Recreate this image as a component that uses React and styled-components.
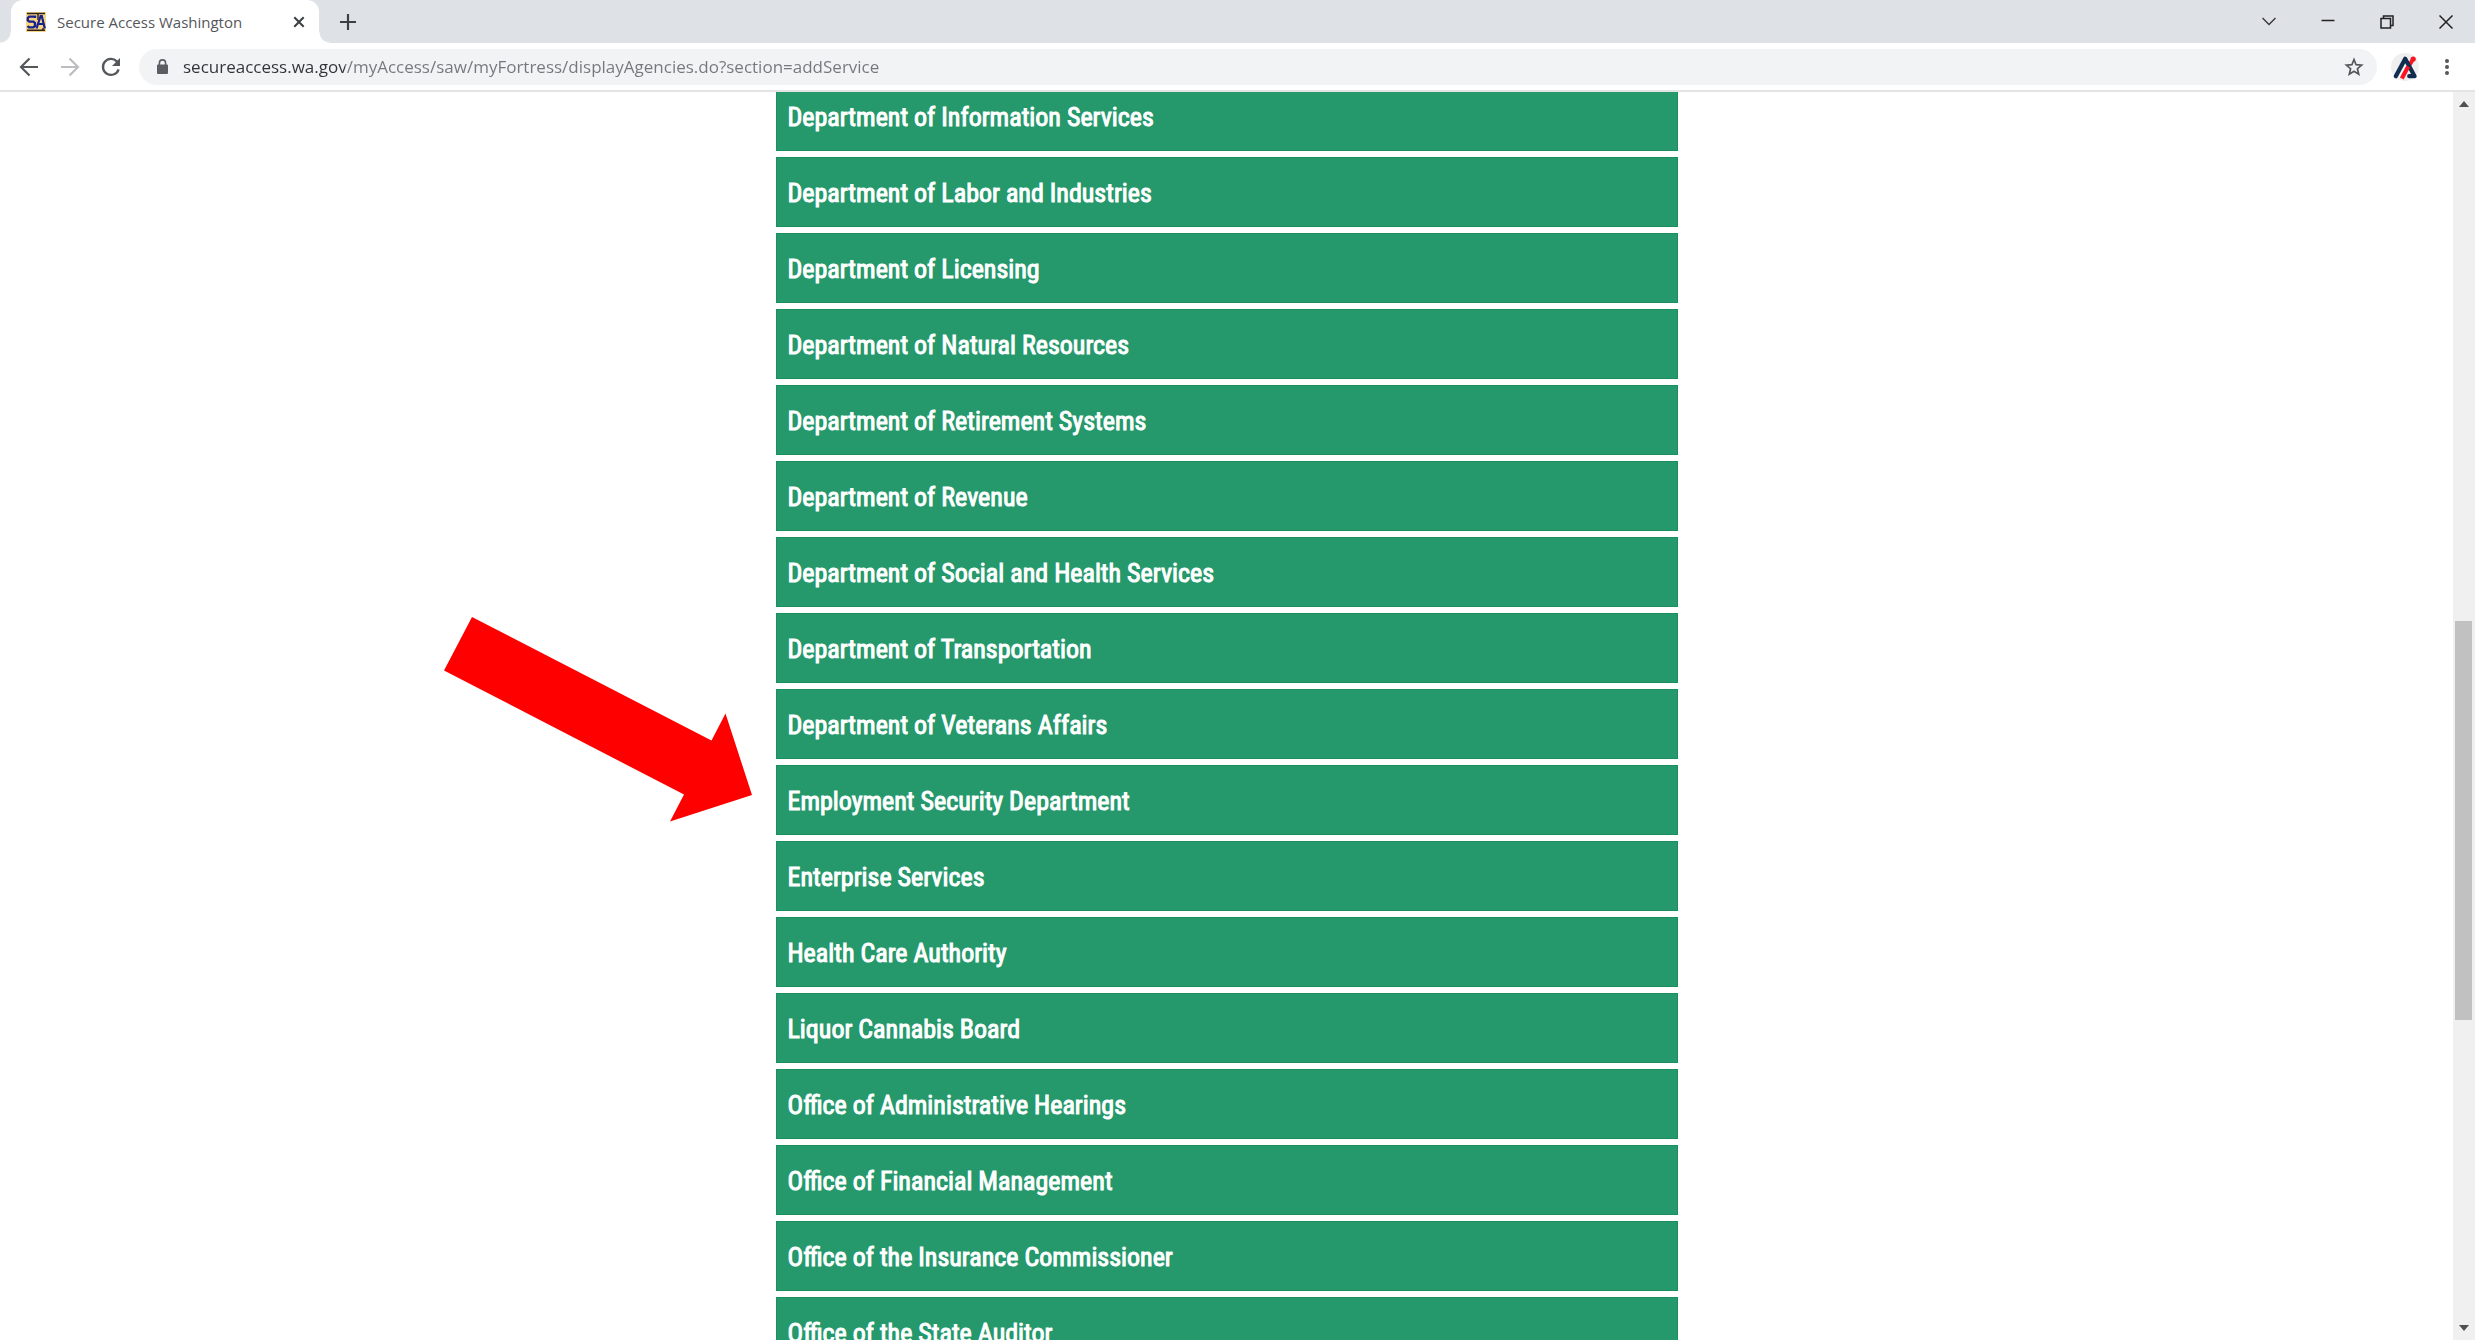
import React, { useState } from "react";
import styled, { createGlobalStyle } from "styled-components";

const GlobalStyle = createGlobalStyle`
  * {
    box-sizing: border-box;
  }

  body {
    margin: 0;
    background: #fff;
    font-family: "Open Sans", "Noto Sans", sans-serif;
  }

  button {
    padding: 0;
    border: none;
    background: none;
    font: inherit;
    cursor: pointer;
  }
`;

const Window = styled.div`
  display: flex;
  flex-direction: column;
  height: 100vh;
  overflow: hidden;
`;

const TabStrip = styled.header`
  display: flex;
  align-items: stretch;
  height: 43px;
  padding-left: 11px;
  background: #dee1e6;
`;

const Tab = styled.div`
  position: relative;
  display: flex;
  align-items: center;
  width: 308px;
  padding: 0 14px 0 15px;
  border-radius: 12px 12px 0 0;
  background: #fff;

  &::before,
  &::after {
    content: "";
    position: absolute;
    bottom: 0;
    width: 11px;
    height: 11px;
  }

  &::before {
    right: 100%;
    background: radial-gradient(circle at 0 0, #dee1e6 10px, #fff 11px);
  }

  &::after {
    left: 100%;
    background: radial-gradient(circle at 100% 0, #dee1e6 10px, #fff 11px);
  }
`;

const TabTitle = styled.span`
  flex: 1;
  padding-left: 11px;
  color: #55575b;
  font-size: 15px;
  white-space: nowrap;
`;

const IconButton = styled.button`
  display: flex;
  align-items: center;
  justify-content: center;
  width: ${(props) => props.$width || 20}px;
  color: ${(props) => props.$color || "#54575b"};
`;

const WindowControls = styled.div`
  display: flex;
  margin-left: auto;
`;

const Toolbar = styled.nav`
  display: flex;
  align-items: center;
  height: 49px;
  padding: 0 7px 0 8px;
  border-bottom: 2px solid #e3e4e6;
  background: #fff;
`;

const AddressBar = styled.div`
  display: flex;
  flex: 1;
  align-items: center;
  height: 36px;
  margin: 0 7px 0 8px;
  padding: 0 13px 0 18px;
  border-radius: 18px;
  background: #f1f3f4;
`;

/* host part is darker than the rest of the address */
const AddressInput = styled.input`
  flex: 1;
  min-width: 0;
  height: 36px;
  margin-left: 15px;
  padding: 0;
  border: none;
  outline: none;
  background: linear-gradient(90deg, #303236 162px, #74777b 162px);
  background-clip: text;
  color: transparent;
  font-family: inherit;
  font-size: 17px;
`;

const Viewport = styled.div`
  display: flex;
  flex: 1;
  min-height: 0;
`;

const Page = styled.main`
  flex: 1;
  overflow: hidden;
`;

const AgencyList = styled.ul`
  display: flex;
  flex-direction: column;
  gap: 6px;
  max-width: 902px;
  margin: -11px auto 0;
  padding: 0;
  list-style: none;
`;

const AgencyItem = styled.li`
  position: relative;
`;

const AgencyButton = styled.button`
  display: block;
  width: 100%;
  height: 70px;
  padding: 2px 11px 0;
  border: 1px solid #1a8f60;
  background: #25986c;
  color: #fff;
  font-family: "Roboto Condensed", Roboto, sans-serif;
  font-size: 26px;
  font-weight: 400;
  -webkit-text-stroke: 1px #fff;
  text-align: left;
`;

const Pointer = styled.svg`
  position: absolute;
  top: -148px;
  right: 100%;
  margin-right: 24px;
`;

const Scrollbar = styled.div`
  display: flex;
  flex-direction: column;
  width: 22px;
  background: #f0f0f0;
`;

const ScrollButton = styled.button`
  display: flex;
  align-items: center;
  justify-content: center;
  height: 24px;
`;

const ScrollTrack = styled.div`
  display: flex;
  flex: 1;
  flex-direction: column;
  padding: 0 3px 0 2px;
`;

const ScrollSpace = styled.div`
  flex: ${(props) => props.$size};
`;

const ScrollThumb = styled.div`
  flex: 399;
  background: #c1c1c1;
`;

const agencies = [
  "Department of Information Services",
  "Department of Labor and Industries",
  "Department of Licensing",
  "Department of Natural Resources",
  "Department of Retirement Systems",
  "Department of Revenue",
  "Department of Social and Health Services",
  "Department of Transportation",
  "Department of Veterans Affairs",
  "Employment Security Department",
  "Enterprise Services",
  "Health Care Authority",
  "Liquor Cannabis Board",
  "Office of Administrative Hearings",
  "Office of Financial Management",
  "Office of the Insurance Commissioner",
  "Office of the State Auditor",
];

const Favicon = () => (
  <svg width="20" height="20" viewBox="0 0 20 20" fill="none">
    <path fill="#f7d584" d="M0 0h20v20H0z" />
    <path stroke="#2b2320" strokeWidth="1.5" d="M1 1.5h18M1 18.2h18M12 2v6M17 16v2" />
    <path stroke="#17218f" strokeWidth="2.4" d="M9 6V4.6H3.2L1.8 6v2.4l1.6 1.2h4L9 11v3l-1.6 1.4H3L1.6 14" />
    <path stroke="#17218f" strokeWidth="2.2" d="M10.5 16.5 14.6 4h1.2l3 12.5M12 12h6" />
  </svg>
);

const BackIcon = () => (
  <svg width="20" height="20" viewBox="0 0 20 20" fill="none" stroke="currentColor" strokeWidth="2.2">
    <path d="M19 10H2.5M10.5 1.5 2 10l8.5 8.5" />
  </svg>
);

const ForwardIcon = () => (
  <svg width="20" height="20" viewBox="0 0 20 20" fill="none" stroke="currentColor" strokeWidth="2.2">
    <path d="M1 10h16.5M9.5 1.5 18 10l-8.5 8.5" />
  </svg>
);

const ReloadIcon = () => (
  <svg width="20" height="20" viewBox="0 0 20 20" fill="none">
    <path stroke="currentColor" strokeWidth="2.3" d="M17.6 12.3A8 8 0 1 1 15.8 4.4L17 5.6" />
    <path fill="currentColor" d="M19 1v8h-8z" />
  </svg>
);

const LockIcon = () => (
  <svg width="11" height="16" viewBox="0 0 11 16" fill="none">
    <path fill="#5a5d61" d="M1 5.5h9a1 1 0 0 1 1 1V14a1 1 0 0 1-1 1H1a1 1 0 0 1-1-1V6.5a1 1 0 0 1 1-1z" />
    <path stroke="#5a5d61" strokeWidth="1.6" d="M2.4 6V4a3.1 3.1 0 0 1 6.2 0v2" />
  </svg>
);

const StarIcon = () => (
  <svg width="20" height="20" viewBox="0 0 20 20" fill="none" stroke="currentColor" strokeWidth="1.7">
    <path d="m10 2.5 2.1 5.2 5.5.4-4.2 3.6 1.3 5.5L10 14.2l-4.7 3 1.3-5.5-4.2-3.6 5.5-.4z" />
  </svg>
);

const ExtensionIcon = () => (
  <svg width="28" height="28" viewBox="0 0 28 28" fill="none" strokeLinejoin="round">
    <circle cx="14" cy="14" r="14" fill="#efefef" />
    <circle cx="22.2" cy="6" r="2.6" fill="#fb1423" />
    <path stroke="#fb1423" strokeWidth="4" d="M21.8 6.5 17 14.5" />
    <path stroke="#112d50" strokeWidth="4.2" strokeLinecap="round" d="M4.8 23.2 14.2 5.8l9.4 17.4h-5.400" />
    <path stroke="#fff" strokeWidth="1.4" d="M8.200 25 15 12.500" />
    <path stroke="#fb1423" strokeWidth="4.200" d="M10.800 25.500 17.200 13.500" />
  </svg>
);

const MenuIcon = () => (
  <svg width="4" height="18" viewBox="0 0 4 18" fill="currentColor">
    <circle cx="2" cy="3" r="2" />
    <circle cx="2" cy="9" r="2" />
    <circle cx="2" cy="15" r="2" />
  </svg>
);

const LineIcon = ({ d, size = 14, stroke = 1.5 }) => (
  <svg width={size} height={size} viewBox="0 0 14 14" fill="none" stroke="currentColor" strokeWidth={stroke}>
    <path d={d} />
  </svg>
);

const App = () => {
  const [address, setAddress] = useState(
    "secureaccess.wa.gov/myAccess/saw/myFortress/displayAgencies.do?section=addService"
  );

  return (
    <Window>
      <GlobalStyle />
      <TabStrip>
        <Tab>
          <Favicon />
          <TabTitle>Secure Access Washington</TabTitle>
          <IconButton aria-label="Close tab" $width={12} $color="#3c4043">
            <LineIcon size={12} stroke={2.4} d="M1.5 1.5l11 11M12.5 1.5l-11 11" />
          </IconButton>
        </Tab>
        <IconButton aria-label="New tab" $width={58} $color="#3c4043">
          <LineIcon size={16} stroke={1.9} d="M7 0v14M0 7h14" />
        </IconButton>
        <WindowControls>
          <IconButton aria-label="Search tabs" $width={59} $color="#3c3c3c">
            <LineIcon d="M.5 3 7 9.5 13.5 3" />
          </IconButton>
          <IconButton aria-label="Minimize" $width={59} $color="#222">
            <LineIcon d="M.5 5.5h13" />
          </IconButton>
          <IconButton aria-label="Restore" $width={60} $color="#222">
            <LineIcon d="M1 3.5h9.5V13H1zM3.5 3.5V1H13v9.5h-2.5" />
          </IconButton>
          <IconButton aria-label="Close" $width={58} $color="#222">
            <LineIcon d="M.5.5l13 13M13.5.5l-13 13" />
          </IconButton>
        </WindowControls>
      </TabStrip>

      <Toolbar>
        <IconButton aria-label="Back" $width={41}>
          <BackIcon />
        </IconButton>
        <IconButton aria-label="Forward" $width={41} $color="#bcbdbf">
          <ForwardIcon />
        </IconButton>
        <IconButton aria-label="Reload" $width={41}>
          <ReloadIcon />
        </IconButton>
        <AddressBar>
          <LockIcon />
          <AddressInput
            aria-label="Address"
            value={address}
            onChange={(e) => setAddress(e.target.value)}
          />
          <IconButton aria-label="Bookmark">
            <StarIcon />
          </IconButton>
        </AddressBar>
        <IconButton aria-label="Extension" $width={42}>
          <ExtensionIcon />
        </IconButton>
        <IconButton aria-label="Menu" $width={42}>
          <MenuIcon />
        </IconButton>
      </Toolbar>

      <Viewport>
        <Page>
          <AgencyList>
            {agencies.map((agency) => (
              <AgencyItem key={agency}>
                <AgencyButton>{agency}</AgencyButton>
                {agency === "Employment Security Department" && (
                  <Pointer width="308" height="205" viewBox="0 0 308 205">
                    <path fill="#f00" d="M28 0 267.5 123.5 281.5 96.5 308 178 226 204.5 240 177.5 0 53.5z" />
                  </Pointer>
                )}
              </AgencyItem>
            ))}
          </AgencyList>
        </Page>
        <Scrollbar>
          <ScrollButton aria-label="Scroll up">
            <svg width="10" height="6" viewBox="0 0 10 6">
              <path fill="#505050" d="M0 6 5 0l5 6z" />
            </svg>
          </ScrollButton>
          <ScrollTrack>
            <ScrollSpace $size={506} />
            <ScrollThumb />
            <ScrollSpace $size={297} />
          </ScrollTrack>
          <ScrollButton aria-label="Scroll down">
            <svg width="10" height="6" viewBox="0 0 10 6">
              <path fill="#505050" d="M0 0h10L5 6z" />
            </svg>
          </ScrollButton>
        </Scrollbar>
      </Viewport>
    </Window>
  );
};

export default App;
